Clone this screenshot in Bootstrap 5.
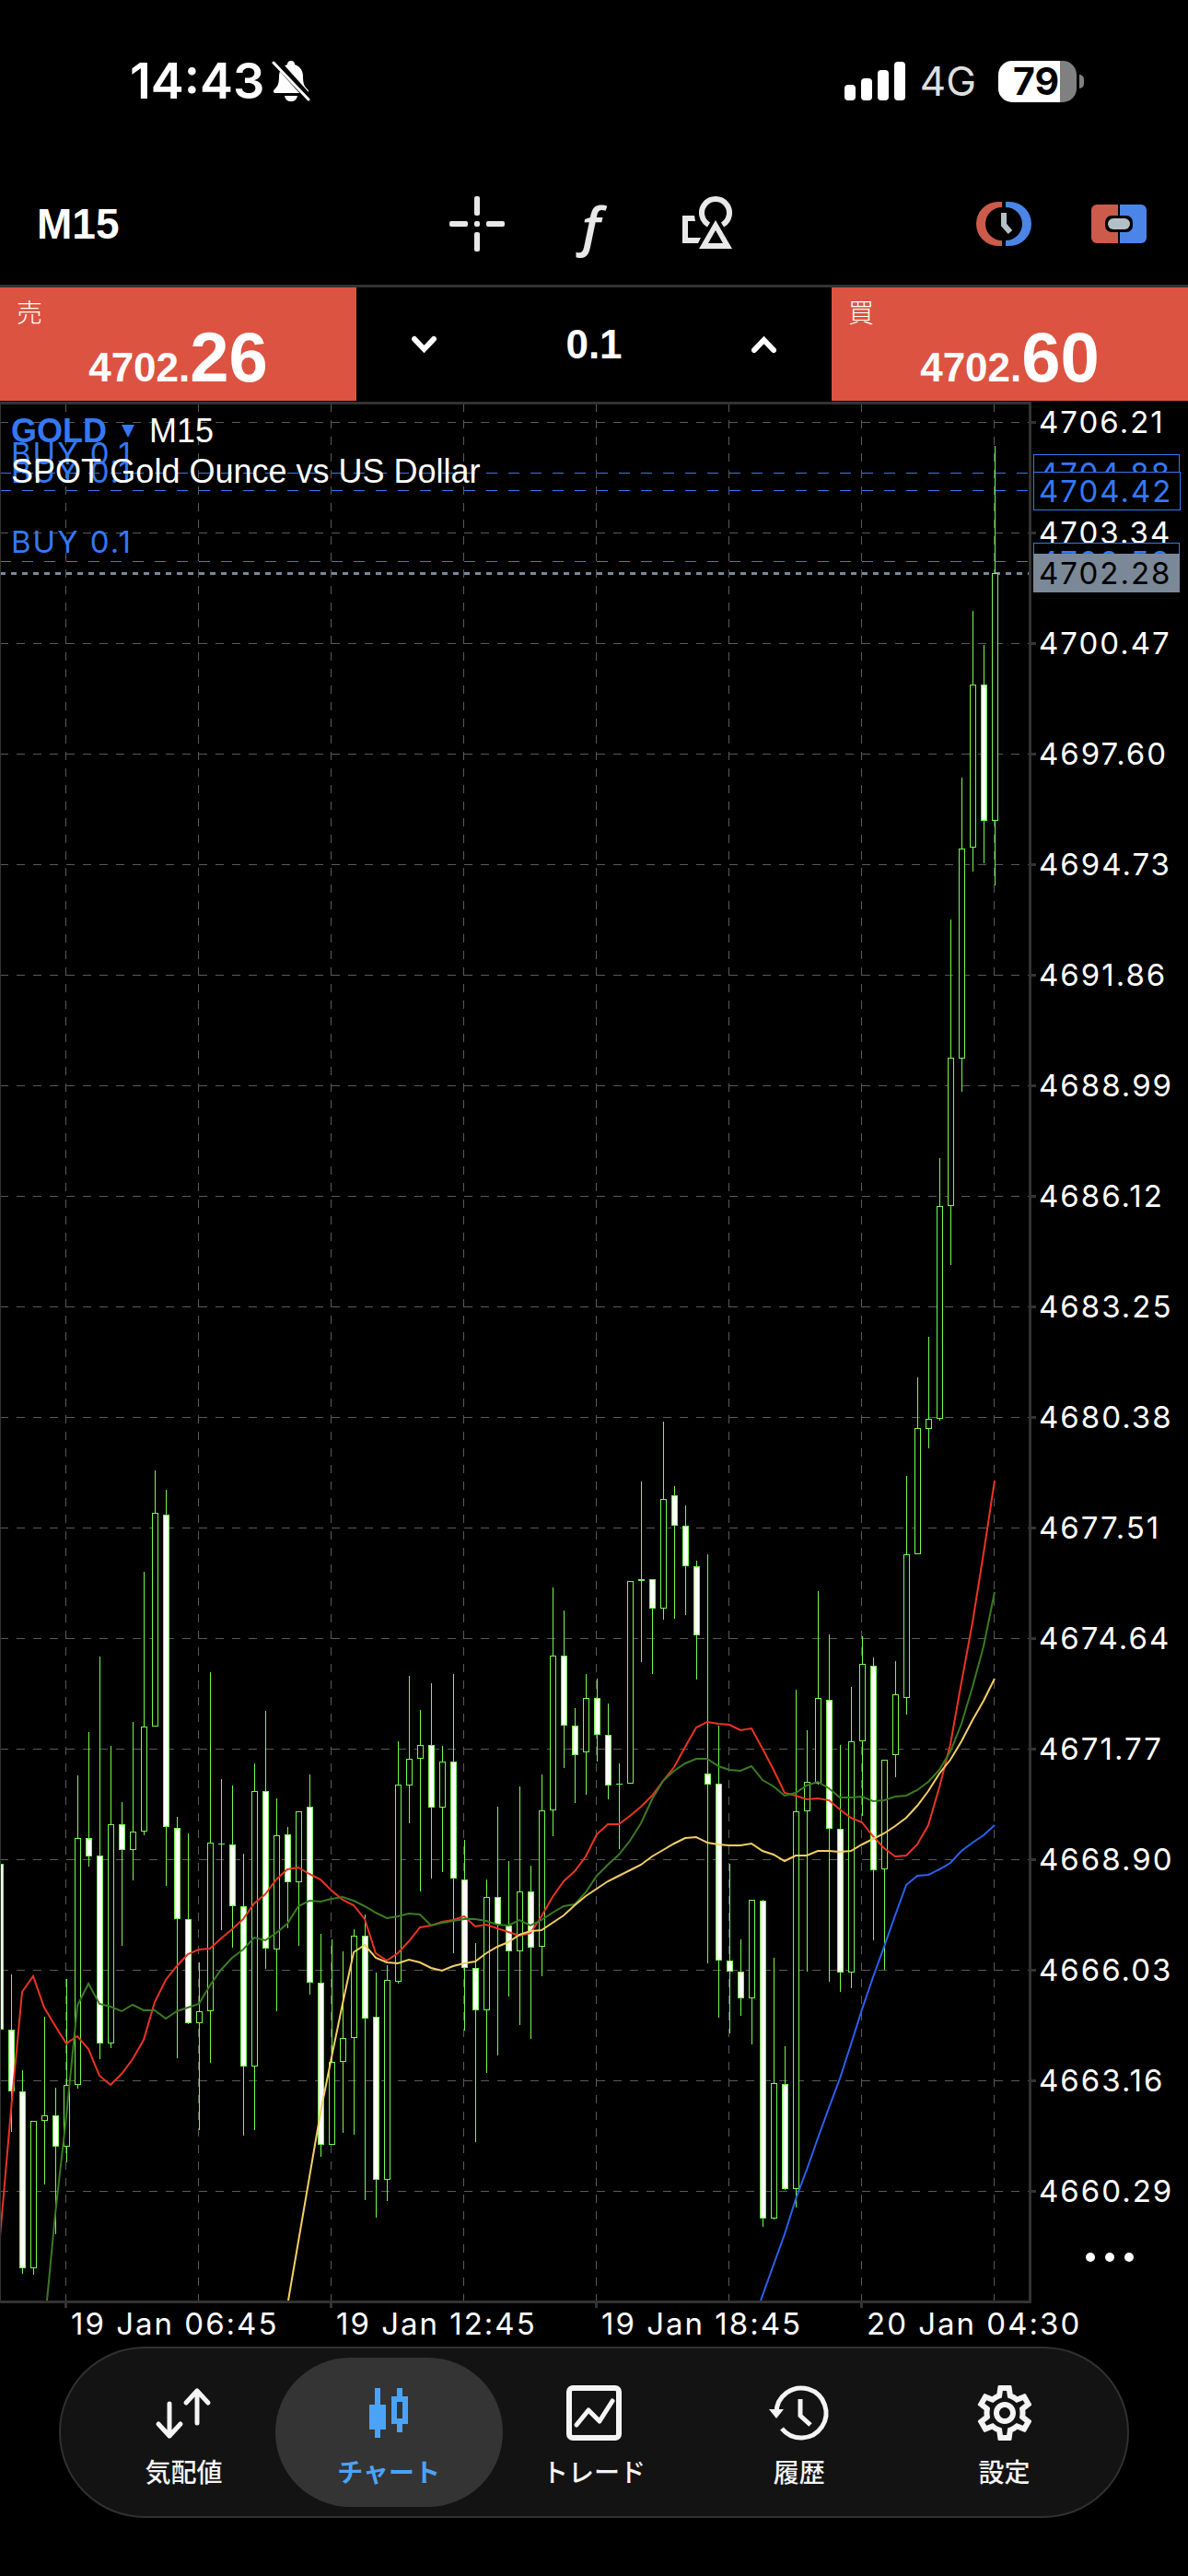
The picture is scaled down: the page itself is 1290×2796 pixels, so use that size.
<!DOCTYPE html>
<html lang="ja">
<head>
<meta charset="utf-8">
<meta name="viewport" content="width=device-width, initial-scale=1">
<title>GOLD M15</title>
<link href="https://cdn.jsdelivr.net/npm/bootstrap@5.3.0/dist/css/bootstrap.min.css" rel="stylesheet">
<style>
  :root { --line: #333333; --sell: #dd5341; --accent: #3478f6; --tab: #4ba3f8; }
  body { background: #000; color: #fff; font-family: Inter, "Noto Sans CJK JP", sans-serif; min-height: 100vh; }
  button { color: inherit; }
  svg { display: block; }
  .bare { background: none; border: 0; padding: 0; }
  .status { height: 176px; padding: 0 113px 0 141px; }
  .clock { font-size: 54px; line-height: 60px; font-weight: 600; }
  .carrier { font-size: 44px; line-height: 56px; color: #dedede; }
  .battery-box { width: 85px; height: 45px; border-radius: 15px; background: linear-gradient(90deg, #fff 67px, #808080 67px); color: #000; font-size: 41px; line-height: 45px; font-weight: 700; padding-left: 16px; }
  .battery-nub { width: 5px; height: 15px; border-radius: 0 5px 5px 0; background: #808080; margin-left: 3px; }
  .tools { height: 136px; padding: 0 45px 0 40px; border-bottom: 3px solid var(--line); }
  .narrow { font-family: "Liberation Sans Narrow", "Liberation Sans", sans-serif; font-weight: 700; }
  .period { font-size: 46px; line-height: 60px; }
  .tool-set { gap: 65px; color: #e8e8e8; }
  .tool-set button, .tool-set svg { width: 60px; height: 60px; }
  .fx { font-family: "Open Sans", sans-serif; font-size: 60px; line-height: 52px; font-style: italic; font-weight: 600; }
  .deal { margin-bottom: 1px; }
  .deal-side { flex: 0 0 30%; height: 123px; }
  .deal-side.bare { background: var(--sell); }
  .deal-side .side-name { left: 18px; top: 10px; font-size: 28px; line-height: 32px; font-family: "Noto Sans CJK JP", sans-serif; font-weight: 300; }
  .deal-price { font-size: 44px; line-height: 72px; }
  .deal-price b { font-size: 76px; }
  .volume { padding: 0 60px; }
  .volume input { width: 120px; background: none; border: 0; color: #fff; font-size: 44px; line-height: 60px; text-align: center; padding: 0; }
  .plot { border: solid var(--line); border-width: 3px 3px 3px 1px; min-width: 0; }
  .plot-canvas { width: 100%; height: auto; }
  .plot-title { left: 11px; top: 7px; font-family: "Liberation Sans", sans-serif; font-size: 36px; line-height: 44px; }
  .symbol { color: var(--accent); font-weight: 700; line-height: 44px; }
  .tracked { font-size: 33px; line-height: 44px; letter-spacing: 2px; }
  .trade-label { font-size: 33px; letter-spacing: 2px; fill: var(--accent); }
  .axis { flex: 0 0 170px; }
  .axis li { height: 120px; padding-left: 8px; }
  .axis li:last-child { height: 44px; }
  .axis li::before { content: ""; position: absolute; left: 0; top: 21px; width: 5px; height: 3px; background: var(--line); }
  .tag { left: 2px; height: 42px; line-height: 40px; padding: 0 8px 0 5px; border: 1px solid var(--accent); background: #000; color: var(--accent); }
  .tag-now { background: #7b8897; border-color: #7b8897; color: #000; }
  .more { height: 100px; }
  .times { height: 47px; padding-left: 70px; }
  .times li { flex: 0 0 288px; padding-left: 7px; }
  .times li::before { content: ""; position: absolute; left: 0; top: 0; width: 3px; height: 5px; background: var(--line); }
  .tabs { margin: 0 64px 63px; height: 186px; padding: 10px; border: 2px solid #303030; border-radius: 93px; background: #131313; color: #f4f4f4; }
  .tabs a { color: inherit; text-decoration: none; height: 162px; border-radius: 81px; font-size: 28px; line-height: 36px; font-weight: 500; font-family: "Noto Sans CJK JP", sans-serif; padding-top: 30px; gap: 15px; }
  .tabs a + a { margin-left: -24px; }
  .tabs a.current { background: #343434; color: var(--tab); font-weight: 700; }
  .tabs svg { width: 60px; height: 60px; overflow: visible; }
</style>
</head>
<body>
<header class="status d-flex align-items-center justify-content-between">
  <div class="d-flex align-items-center">
    <span class="clock">14:43</span>
    <svg class="ms-2" width="42" height="46" viewBox="0 0 42 46" role="img" aria-label="消音">
      <path d="M21 1c3 0 4 2 4 4 6 2 9 7 9 13 0 9 2 11 5 14 2 2 1 4-1 4H4c-2 0-3-2-1-4 3-3 5-5 5-14C8 12 11 7 17 5c0-2 1-4 4-4z" fill="#fff"/>
      <path d="M14 39h14c-1 4-3 6-7 6s-6-2-7-6z" fill="#fff"/>
      <path d="M4 1l37 41" stroke="#000" stroke-width="8"/>
      <path d="M2 3l38 40" stroke="#fff" stroke-width="3" stroke-linecap="round"/>
    </svg>
  </div>
  <div class="d-flex align-items-center">
    <svg width="66" height="42" viewBox="0 0 66 42" fill="#fff" role="img" aria-label="電波">
      <rect x="0" y="25" width="12" height="17" rx="4"/><rect x="18" y="18" width="12" height="24" rx="4"/><rect x="36" y="9" width="12" height="33" rx="4"/><rect x="54" y="0" width="12" height="42" rx="4"/>
    </svg>
    <span class="carrier ms-3 me-4">4G</span>
    <div class="battery-box">79</div><div class="battery-nub"></div>
  </div>
</header>

<nav class="tools d-flex align-items-center">
  <div class="col text-start"><button class="bare narrow period" type="button">M15</button></div>
  <div class="tool-set d-flex">
    <button class="bare" type="button" aria-label="クロスヘア"><svg viewBox="0 0 60 60" fill="currentColor"><rect x="27" width="6" height="21" rx="2"/><rect x="27" y="39" width="6" height="21" rx="2"/><rect y="27" width="20" height="6" rx="2"/><rect x="40" y="27" width="20" height="6" rx="2"/><rect x="27" y="27" width="6" height="6" rx="2"/></svg></button>
    <button class="bare fx" type="button" aria-label="インディケータ">ƒ</button>
    <button class="bare" type="button" aria-label="オブジェクト"><svg viewBox="0 0 60 60" fill="currentColor"><path d="M31.500 31A15 15 0 1 1 46.500 31" fill="none" stroke="currentColor" stroke-width="6"/><path d="M39 22L60 60H17z" fill="#000"/><path fill-rule="evenodd" d="M39 26L57 57H21zM39 37L31 51H47z"/><path d="M3 21H16L17 27H9V45H23L20 51H3z"/></svg></button>
  </div>
  <div class="col d-flex justify-content-end tool-set">
    <button class="bare" type="button" aria-label="時間"><svg viewBox="0 0 60 60"><path fill="#cb5b4b" d="M28 6H24A24 24 0 0 0 24 54H28V48A18 18 0 0 1 28 12z"/><path fill="#4b85e8" d="M32 6H36A24 24 0 0 1 36 54H32V48A18 18 0 0 0 32 12z"/><path d="M30 18V31L37 39" fill="none" stroke="#b4c0c6" stroke-width="6"/></svg></button>
    <button class="bare" type="button" aria-label="ワンクリック取引"><svg viewBox="0 0 60 60"><path fill="#cb5b4b" d="M29 9H6a6 6 0 0 0-6 6V45a6 6 0 0 0 6 6H29z"/><path fill="#4b85e8" d="M31 9H54a6 6 0 0 1 6 6V45a6 6 0 0 1-6 6H31z"/><rect x="15" y="21" width="30" height="18" rx="7"/><rect x="18" y="24" width="24" height="12" rx="6" fill="#b4c0c6"/></svg></button>
  </div>
</nav>

<section class="deal d-flex">
  <button class="deal-side bare position-relative d-flex justify-content-center align-items-end" type="button"><span class="side-name position-absolute">売</span><span class="deal-price narrow d-block">4702.<b>26</b></span></button>
  <div class="volume flex-grow-1 d-flex align-items-center justify-content-between">
    <button class="bare" type="button" aria-label="減らす"><svg width="27" height="20" viewBox="0 0 27 20"><path d="M3 4L13.500 15L24 4" fill="none" stroke="#fff" stroke-width="6" stroke-linecap="round"/></svg></button>
    <input class="narrow" type="text" value="0.1" aria-label="数量">
    <button class="bare" type="button" aria-label="増やす"><svg width="27" height="20" viewBox="0 0 27 20"><path d="M3 16L13.500 5L24 16" fill="none" stroke="#fff" stroke-width="6" stroke-linecap="round"/></svg></button>
  </div>
  <button class="deal-side bare position-relative d-flex justify-content-center align-items-end" type="button"><span class="side-name position-absolute">買</span><span class="deal-price narrow d-block">4702.<b>60</b></span></button>
</section>

<main>
  <div class="d-flex">
    <div class="plot flex-grow-1 position-relative">
      <svg class="plot-canvas" id="plot" viewBox="1 439 1116 2058" role="img" aria-label="GOLD M15 チャート"></svg>
      <div class="plot-title position-absolute">
        <div class="d-flex">
          <button class="symbol bare d-flex align-items-center" type="button">GOLD<svg class="ms-3 me-3" width="14" height="14" viewBox="0 0 14 14"><path d="M0 0H14L7 14z" fill="currentColor"/></svg></button>
          <span>M15</span>
        </div>
        <div>SPOT Gold Ounce vs US Dollar</div>
      </div>
    </div>
    <div class="axis position-relative">
      <ul class="list-unstyled m-0 tracked" id="prices"></ul>
      <button class="more bare d-block w-100" type="button" aria-label="その他"><svg class="mx-auto" width="52" height="10" viewBox="0 0 52 10" fill="#fff"><circle cx="5" cy="5" r="5"/><circle cx="26" cy="5" r="5"/><circle cx="47" cy="5" r="5"/></svg></button>
      <div id="tags"></div>
    </div>
  </div>
  <ul class="times list-unstyled m-0 d-flex tracked text-nowrap">
    <li class="position-relative">19 Jan 06:45</li><li class="position-relative">19 Jan 12:45</li><li class="position-relative">19 Jan 18:45</li><li class="position-relative">20 Jan 04:30</li>
  </ul>
</main>

<nav class="tabs d-flex">
  <a href="#quotes" class="col d-flex flex-column align-items-center"><svg viewBox="0 0 60 60" fill="none" stroke="currentColor" stroke-width="5" stroke-linecap="round" stroke-linejoin="round"><path d="M15 20V55M3 42L15 55L27 42M45 41V6M33 19L45 6L57 19"/></svg><span>気配値</span></a>
  <a href="#chart" class="current col d-flex flex-column align-items-center"><svg viewBox="0 0 60 60" fill="currentColor"><path fill-rule="evenodd" d="M15 3h6v18h6v27h-6v9h-6v-9H9V21h6zM39 3h6v9h6v30h-6v9h-6v-9h-6V12h6zM39 18v18h6V18z"/></svg><span>チャート</span></a>
  <a href="#trade" class="col d-flex flex-column align-items-center"><svg viewBox="0 0 60 60" fill="none" stroke="currentColor"><rect x="3" y="3" width="54" height="54" rx="4" stroke-width="6"/><path d="M11 43L24 27L36 39L50 17" stroke-width="5" stroke-linecap="round" stroke-linejoin="round"/></svg><span>トレード</span></a>
  <a href="#history" class="col d-flex flex-column align-items-center"><svg viewBox="0 0 60 60" fill="none" stroke="currentColor" stroke-width="5"><path d="M5 30A27 27 0 1 1 11 47"/><path d="M-3 26H13L5 36z" fill="currentColor" stroke="none"/><path d="M31 15V33L42 43"/></svg><span>履歴</span></a>
  <a href="#settings" class="col d-flex flex-column align-items-center"><svg viewBox="2 2 20 20" fill="currentColor"><path d="M19.430 12.980c.040-.320.070-.640.070-.980 0-.340-.030-.660-.070-.980l2.110-1.650c.190-.150.240-.420.120-.640l-2-3.460c-.090-.160-.260-.250-.440-.250-.060 0-.120.010-.170.030l-2.490 1c-.520-.400-1.080-.730-1.690-.980l-.380-2.650C14.460 2.180 14.250 2 14 2h-4c-.250 0-.460.180-.490.420l-.380 2.650c-.610.250-1.170.590-1.690.980l-2.490-1c-.060-.020-.120-.030-.180-.030-.170 0-.340.090-.430.250l-2 3.460c-.130.220-.070.490.120.640l2.110 1.650c-.040.320-.070.650-.070.980 0 .330.030.660.070.980l-2.110 1.650c-.190.150-.240.420-.120.640l2 3.460c.090.160.260.250.440.250.060 0 .120-.010.170-.030l2.490-1c.520.400 1.080.730 1.690.980l.380 2.650c.030.240.240.420.490.420h4c.250 0 .460-.180.490-.420l.380-2.650c.610-.250 1.170-.590 1.690-.980l2.490 1c.060.020.120.030.180.030.170 0 .340-.090.430-.250l2-3.460c.120-.220.070-.490-.120-.640l-2.110-1.650zm-1.980-1.710c.040.310.050.520.050.730 0 .210-.020.430-.050.730l-.140 1.130.890.700 1.080.840-.700 1.210-1.270-.510-1.040-.420-.900.680c-.430.320-.840.560-1.250.730l-1.060.430-.160 1.130-.200 1.350h-1.400l-.190-1.350-.160-1.130-1.060-.430c-.430-.180-.830-.410-1.230-.710l-.910-.700-1.060.430-1.270.510-.700-1.210 1.080-.840.890-.700-.140-1.130c-.030-.310-.050-.540-.050-.740s.020-.430.050-.730l.140-1.130-.890-.700-1.080-.840.700-1.210 1.270.510 1.040.420.900-.680c.430-.320.840-.560 1.250-.730l1.060-.430.160-1.130.200-1.350h1.390l.190 1.350.160 1.130 1.060.430c.430.180.830.410 1.230.710l.910.700 1.060-.430 1.270-.510.700 1.210-1.070.850-.890.700.140 1.130zM12 8c-2.210 0-4 1.790-4 4s1.790 4 4 4 4-1.790 4-4-1.790-4-4-4zm0 6c-1.100 0-2-.900-2-2s.900-2 2-2 2 .900 2 2-.900 2-2 2z"/></svg><span>設定</span></a>
</nav>

<script>
// One row per bar, 12 units apart: high, body top, body bottom, low, falling (1) or rising (0)
const bars = [
[2023,2023,2203,2203,1],[2143,2203,2270,2314,1],[2247,2270,2462,2468,1],[2302,2302,2462,2469,0],[2189,2296,2302,2371,0],[2266,2296,2330,2425,1],
[2148,2263,2330,2347,0],[1927,1995,2263,2267,0],[1880,1995,2015,2026,1],[1798,2014,2218,2235,1],[1895,1980,2218,2223,0],[1956,1980,2008,2112,1],
[1869,1988,2008,2041,0],[1706,1874,1988,1992,0],[1596,1642,1874,1874,0],[1617,1644,1983,2047,1],[1972,1984,2083,2234,1],[1990,2083,2196,2197,1],
[2130,2183,2196,2312,0],[1815,2000,2183,2239,0],[1931,2001,2002,2095,0],[1938,2002,2069,2114,1],[2012,2069,2243,2318,1],[1914,1944,2243,2312,0],
[1857,1944,2115,2137,1],[1952,1992,2116,2183,0],[1983,1991,2043,2093,1],[1966,1966,2043,2112,0],[1926,1961,2152,2165,1],[2099,2152,2328,2341,1],
[2105,2238,2328,2328,0],[2118,2212,2238,2315,0],[2094,2101,2212,2317,0],[2078,2101,2191,2388,1],[2141,2189,2366,2407,1],[2133,2149,2366,2389,0],
[1890,1937,2151,2153,0],[1819,1909,1938,1979,0],[1856,1894,1909,2053,0],[1827,1894,1962,2039,1],[1895,1912,1962,2032,0],[1817,1912,2039,2120,1],
[1997,2040,2136,2204,1],[2109,2136,2182,2325,1],[2040,2059,2182,2250,0],[1961,2059,2089,2231,1],[2020,2090,2118,2167,1],[1939,2053,2118,2198,0],
[2025,2053,2114,2213,1],[1926,1965,2113,2145,0],[1723,1797,1965,1993,0],[1748,1797,1873,1919,1],[1854,1873,1905,1957,1],[1817,1843,1902,1948,0],
[1822,1843,1883,1912,1],[1849,1883,1938,1953,1],[1914,1936,1937,2007,0],[1716,1716,1936,1936,0],[1608,1714,1716,1804,0],[1714,1714,1746,1817,1],
[1543,1627,1746,1758,0],[1613,1623,1656,1757,1],[1634,1656,1700,1753,1],[1694,1700,1775,1823,1],[1687,1925,1937,2131,1],[1873,1936,2128,2190,1],
[2023,2128,2140,2207,1],[2105,2140,2169,2188,1],[2062,2062,2169,2219,0],[2062,2063,2408,2417,1],[2125,2261,2408,2409,0],[2221,2262,2376,2377,1],
[1834,1966,2376,2396,0],[1878,1934,1966,2140,0],[1727,1843,1936,1937,0],[1774,1845,1985,2151,1],[1894,1985,2141,2162,1],[1831,1890,2141,2158,0],
[1776,1806,1890,1971,0],[1799,1808,2030,2106,1],[1910,1910,2029,2138,0],[1803,1839,1905,1929,0],[1602,1687,1843,1861,0],[1495,1550,1687,1687,0],
[1451,1540,1551,1572,0],[1257,1309,1540,1542,0],[998,1148,1309,1373,0],[844,921,1149,1185,0],[663,743,920,946,0],[700,743,891,937,1],[484,622,891,961,0]
];
// Moving averages: colour, start index, optional lead-in point, one value per bar
const averages = [
{color:'#eb3323', from:0, lead:null, v:[2428,2290,2162,2145,2179,2199,2218,2210,2224,2253,2263,2251,2235,2214,2173,2149,2134,2121,2116,2115,2104,2094,2083,2066,2056,2040,2029,2027,2034,2040,2052,2062,2068,2083,2120,2128,2120,2107,2092,2090,2086,2084,2080,2091,2089,2093,2097,2101,2098,2080,2059,2042,2031,2015,1991,1980,1980,1971,1961,1949,1933,1918,1896,1875,1869,1871,1872,1878,1876,1898,1921,1946,1949,1953,1952,1954,1964,1973,1978,1993,2006,2015,2014,2002,1981,1940,1893,1826,1761,1686,1607]},
{color:'#3a7b22', from:5, lead:[51,2497], v:[2403,2297,2177,2153,2175,2178,2183,2176,2182,2182,2191,2183,2179,2175,2155,2138,2125,2116,2103,2106,2098,2088,2069,2063,2064,2061,2059,2063,2069,2076,2082,2080,2077,2078,2090,2087,2085,2083,2083,2085,2089,2090,2084,2090,2084,2076,2069,2067,2054,2036,2024,2013,1998,1979,1953,1933,1922,1914,1909,1909,1917,1921,1922,1917,1932,1939,1949,1946,1938,1934,1941,1951,1951,1950,1955,1954,1950,1949,1943,1934,1921,1901,1871,1831,1787,1728]},
{color:'#f3cf63', from:29, lead:[313,2497], v:[2293,2233,2175,2119,2111,2125,2130,2131,2127,2130,2136,2139,2134,2131,2129,2120,2113,2108,2100,2096,2095,2087,2079,2068,2058,2050,2042,2036,2030,2024,2015,2008,2001,1995,1994,2000,2002,2003,2003,2001,2009,2013,2020,2014,2014,2009,2009,2010,2009,2002,1996,1990,1982,1973,1960,1944,1925,1910,1890,1867,1846,1822]},
{color:'#2b61f3', from:70, lead:[826,2497], v:[2458,2425,2387,2355,2321,2288,2256,2219,2181,2146,2113,2079,2046,2036,2035,2029,2022,2009,2000,1992,1981]}
];
let s = '<g shape-rendering="crispEdges" fill="none">';
for (let k = 0; k <= 16; k++) s += `<path d="M0 ${458.5 + 120 * k}H1117" stroke="#5a5a5a" stroke-dasharray="9 9"/>`;
for (let x = 71.5; x < 1117; x += 144) s += `<path d="M${x} 438V2497" stroke="#5a5a5a" stroke-dasharray="9 9"/>`;
for (const y of [513.5, 532.5, 609.5]) s += `<path d="M0 ${y}H1117" stroke="#3478f6" stroke-dasharray="12 12"/>`;
s += '<path d="M0 622.5H1117" stroke="#7b8897" stroke-width="3" stroke-dasharray="6 6"/>';
bars.forEach(([h, t, b, l, down], i) => {
  const x = 12 * i + 0.5;
  s += `<path d="M${x} ${h}V${t}M${x} ${b}V${l}" stroke="#75fb4c"/>`;
  s += b - t < 3 ? `<rect x="${x - 3.5}" y="${t}" width="7" height="${b - t}" fill="#75fb4c"/>`
    : `<rect x="${x - 3}" y="${t + .5}" width="6" height="${b - t - 1}" stroke="#75fb4c" fill="${down ? '#fff' : '#000'}"/>`;
});
for (const a of averages) {
  const p = a.v.map((y, i) => `${12 * (a.from + i)} ${y}`);
  if (a.lead) p.unshift(a.lead.join(' '));
  s += `<path d="M${p.join('L')}" stroke="${a.color}" stroke-width="2" shape-rendering="auto"/>`;
}
s += '</g>';
for (const y of [504, 524, 600]) s += `<text class="trade-label" x="12" y="${y}">BUY 0.1</text>`;
document.getElementById('plot').innerHTML = s;
let rows = '';
for (let k = 0; k <= 16; k++) rows += `<li class="position-relative">${(4706.21 - 2.87 * k).toFixed(2)}</li>`;
document.getElementById('prices').innerHTML = rows;
document.getElementById('tags').innerHTML = [['4704.88', 57], ['4704.42', 76], ['4702.58', 153], ['4702.28', 165]]
  .map(([t, y], i) => `<span class="tag tracked position-absolute${i === 3 ? ' tag-now' : ''}" style="top:${y}px">${t}</span>`).join('');
</script>
<script src="https://cdn.jsdelivr.net/npm/bootstrap@5.3.0/dist/js/bootstrap.bundle.min.js"></script>
</body>
</html>
